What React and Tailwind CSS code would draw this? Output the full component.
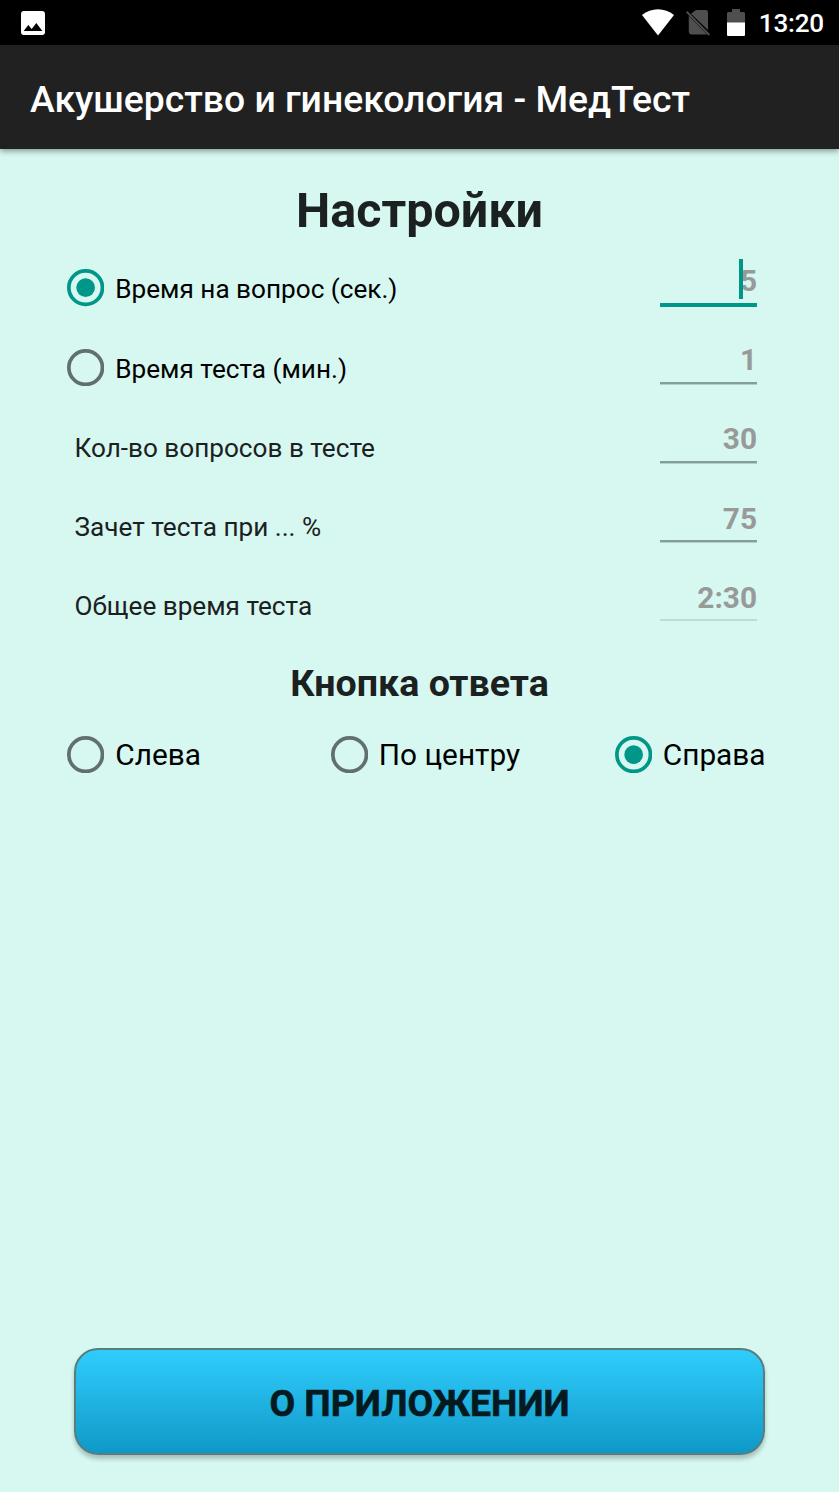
import React, { useState } from 'react';

const StatusBar = () => (
  <div className="h-[45px] bg-black flex items-center justify-between pl-[17px] pr-[15px] text-white">
    <svg className="w-8 h-8" viewBox="0 0 24 24" fill="currentColor">
      <path d="M21 19V5c0-1.1-.9-2-2-2H5c-1.1 0-2 .9-2 2v14c0 1.1.9 2 2 2h14c1.1 0 2-.9 2-2zM8.5 13.5l2.5 3.01L14.5 12l4.5 6H5l3.5-4.5z" />
    </svg>
    <div className="flex items-center">
      <svg className="w-8 h-[27px] mr-3" viewBox="0 0 32 27" fill="currentColor">
        <path d="M16 26.5L0 6C4.600 2.300 10.200.2 16 .2S27.400 2.300 32 6z" />
      </svg>
      <svg className="w-6 h-[27px] mr-[17px]" viewBox="0 0 24 27" fill="#4f4f4f">
        <path d="M10 1h9.500A2.500 2.500 0 0 1 22 3.500V21L5 4.800z" />
        <path d="M2.800 6.800L20.800 25.200Q20.300 25.500 19.500 25.500H5.200A2.500 2.500 0 0 1 2.800 23z" />
        <path d="M1.400 2.100L.1 3.500 22.600 26.700 24 25.300z" />
      </svg>
      <svg className="w-[18px] h-[27px] mr-[14px]" viewBox="0 0 18 27">
        <path d="M0 14V4.500Q0 3 1.500 3H5V0h8v3h3.500Q18 3 18 4.500V14z" fill="#4f4f4f" />
        <path d="M0 13.600h18V26q0 1-1 1H1q-1 0-1-1z" fill="#fff" />
      </svg>
      <span className="pt-[2px] text-[26.1px] leading-none font-medium tracking-[-0.2px]">13:20</span>
    </div>
  </div>
);

const Radio = ({ label, checked, onChange, className }) => (
  <button type="button" role="radio" aria-checked={checked} onClick={onChange} className="flex items-center text-black">
    <svg className={checked ? 'w-[37.3px] h-[37.3px] text-[#009688]' : 'w-[37.3px] h-[37.3px] text-[#61706d]'} viewBox="0 0 20 20">
      <circle cx="10" cy="10" r="9" fill="none" stroke="currentColor" strokeWidth="2" />
      {checked && <circle cx="10" cy="10" r="5" fill="currentColor" />}
    </svg>
    <span className={className}>{label}</span>
  </button>
);

const Field = ({ value, focused, disabled }) => (
  <div className="relative w-[97px] h-[48px] self-start mt-[10.7px]">
    <div className="text-right text-[29.8px] leading-[43px] font-bold text-[#979a99]">{value}</div>
    {focused && <div className="absolute right-[14px] top-0 w-1 h-10 bg-[#009688]" />}
    {focused && <div className="absolute left-0 top-[44px] w-full h-1 bg-[#009688]" />}
    {!focused && (
      <div className={disabled ? 'absolute left-0 top-[43.5px] w-full h-[2px] bg-[#c0d9d3]' : 'absolute left-0 top-[43.5px] w-full h-[2px] bg-[#82a099] border-b border-[#b5cec8] box-content'} />
    )}
  </div>
);

const rows = [
  { id: 'question', label: 'Время на вопрос (сек.)', value: '5', radio: true },
  { id: 'test', label: 'Время теста (мин.)', value: '1', radio: true },
  { id: 'count', label: 'Кол-во вопросов в тесте', value: '30' },
  { id: 'pass', label: 'Зачет теста при ... %', value: '75' },
  { id: 'total', label: 'Общее время теста', value: '2:30', disabled: true },
];

export default function App() {
  const [mode, setMode] = useState('question');
  const [side, setSide] = useState('right');

  return (
    <div className="w-[839px] h-[1492px] flex flex-col bg-[#d7f7f1] font-['Roboto',sans-serif] overflow-hidden">
      <StatusBar />
      <header className="h-[104px] shrink-0 bg-[#212121] flex items-center pl-[30px] pt-[6px] text-white text-[37.3px] font-medium whitespace-nowrap shadow-[0_2px_6px_rgba(0,0,0,0.4)]">
        Акушерство и гинекология - МедТест
      </header>
      <main className="flex-1 flex flex-col">
        <h1 className="mt-[33px] h-[58px] leading-[58px] text-center text-[48.5px] font-bold text-[#1b2120]">Настройки</h1>
        <div className="mt-[8.3px]">
          {rows.map((row) => (
            <div key={row.id} className="h-[79.25px] flex items-center justify-between pl-[67px] pr-[82px]">
              {row.radio ? (
                <Radio
                  label={row.label}
                  checked={mode === row.id}
                  onChange={() => setMode(row.id)}
                  className="ml-[11px] pt-[3px] text-[26.15px] leading-none"
                />
              ) : (
                <span className="pl-[7.5px] pt-[3px] text-[26.15px] leading-none text-[#1b2120]">{row.label}</span>
              )}
              <Field value={row.value} focused={row.id === 'question'} disabled={row.disabled} />
            </div>
          ))}
        </div>
        <h2 className="mt-[16px] h-[44px] leading-[44px] text-center text-[37.6px] font-bold text-[#1b2120]">Кнопка ответа</h2>
        <div role="radiogroup" className="mt-[31px] flex items-center pl-[67px]">
          <div className="w-[263.5px]">
            <Radio label="Слева" checked={side === 'left'} onChange={() => setSide('left')} className="ml-[11px] pt-[2px] text-[29.8px] leading-none" />
          </div>
          <div className="w-[284px]">
            <Radio label="По центру" checked={side === 'center'} onChange={() => setSide('center')} className="ml-[11px] pt-[2px] text-[29.8px] leading-none" />
          </div>
          <Radio label="Справа" checked={side === 'right'} onChange={() => setSide('right')} className="ml-[11px] pt-[2px] text-[29.8px] leading-none" />
        </div>
        <button
          type="button"
          className="mt-auto mb-[37px] mx-[74px] h-[107px] pt-[5px] rounded-[24px] border-2 border-[#567e7c] bg-linear-to-b from-[#30cefd] to-[#0d98c7] bg-origin-border text-[37.3px] font-bold text-[#051a20] [-webkit-text-stroke:0.6px_#051a20] shadow-[0_4px_4px_rgba(0,0,0,0.22)]"
        >
          О ПРИЛОЖЕНИИ
        </button>
      </main>
    </div>
  );
}
